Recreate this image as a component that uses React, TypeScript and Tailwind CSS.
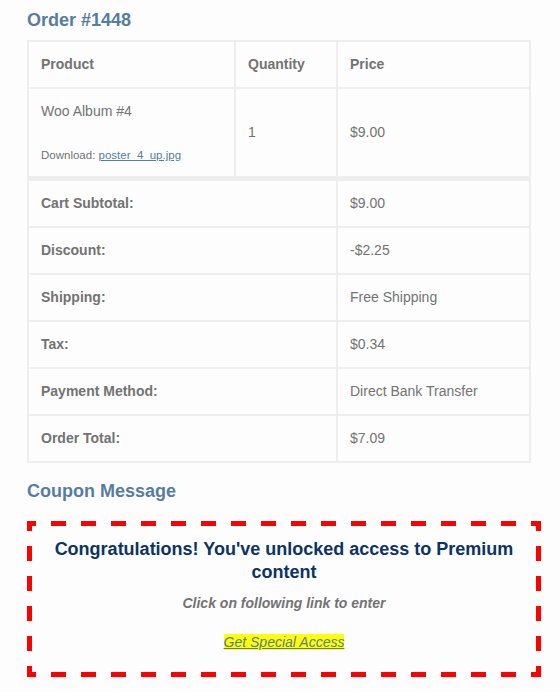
const lineItems = [
  { name: 'Woo Album #4', qty: 1, price: '$9.00', file: 'poster_4_up.jpg' },
]

const totals = [
  { label: 'Cart Subtotal:', value: '$9.00' },
  { label: 'Discount:', value: '-$2.25' },
  { label: 'Shipping:', value: 'Free Shipping' },
  { label: 'Tax:', value: '$0.34' },
  { label: 'Payment Method:', value: 'Direct Bank Transfer' },
  { label: 'Order Total:', value: '$7.09' },
]

const cell = 'border border-[#eeeeee] p-3 text-left align-middle'

// dashed red frame, 5px wide, 15px dashes / 15px gaps with solid corners
function DashedFrame({ w, h }: { w: number; h: number }) {
  const t = 5
  const rects: { x: number; y: number; w: number; h: number }[] = []
  // corners
  rects.push({ x: 0, y: 0, w: 9, h: t }, { x: 0, y: 0, w: t, h: 10 })
  rects.push({ x: w - 10, y: 0, w: 10, h: t }, { x: w - t, y: 0, w: t, h: 10 })
  rects.push({ x: 0, y: h - t, w: 9, h: t }, { x: 0, y: h - 11, w: t, h: 11 })
  rects.push({ x: w - 10, y: h - t, w: 10, h: t }, { x: w - t, y: h - 11, w: t, h: 11 })
  for (let x = 24; x + 15 <= w - 25; x += 30) {
    rects.push({ x, y: 0, w: 15, h: t }, { x, y: h - t, w: 15, h: t })
  }
  for (let y = 25; y + 15 <= h - 26; y += 30) {
    rects.push({ x: 0, y, w: t, h: 15 }, { x: w - t, y, w: t, h: 15 })
  }
  return (
    <svg className="pointer-events-none absolute inset-0" width={w} height={h}>
      {rects.map((r, i) => (
        <rect key={i} x={r.x} y={r.y} width={r.w} height={r.h} fill="#ff0000" />
      ))}
    </svg>
  )
}

export default function App() {
  return (
    <div className="min-h-screen bg-[#fdfdfd] font-['Liberation_Sans',Arial,sans-serif] text-[14px] leading-[21px] text-[#737373]">
      <div className="pl-[27px] pt-[9px] pb-1">
        <h2 className="mb-[8px] text-[18px] leading-[23px] font-bold text-[#557da1]">Order #1448</h2>

        <table className="w-[504px] table-fixed border-separate border-spacing-0 border border-[#eeeeee]">
          <thead>
            <tr>
              <th className={`${cell} w-[207px] font-bold`}>Product</th>
              <th className={`${cell} w-[102px] font-bold`}>Quantity</th>
              <th className={`${cell} w-[193px] font-bold`}>Price</th>
            </tr>
          </thead>
          <tbody>
            {lineItems.map(item => (
              <tr key={item.name}>
                <td className={cell}>
                  {item.name}
                  <div className="mt-[24px] text-[11.5px] leading-[18px]">
                    Download: <a href="#" className="text-[#557da1] underline">{item.file}</a>
                  </div>
                </td>
                <td className={cell}>{item.qty}</td>
                <td className={cell}>{item.price}</td>
              </tr>
            ))}
          </tbody>
          <tfoot>
            {totals.map((t, i) => (
              <tr key={t.label}>
                <th colSpan={2} className={`${cell} font-bold ${i === 0 ? 'border-t-4' : ''}`}>{t.label}</th>
                <td className={`${cell} ${i === 0 ? 'border-t-4' : ''}`}>{t.value}</td>
              </tr>
            ))}
          </tfoot>
        </table>

        <h2 className="mt-[17px] mb-[18px] text-[18px] leading-[23px] font-bold text-[#557da1]">Coupon Message</h2>

        <div className="relative h-[156px] w-[514px] px-[21px] pt-[17px] text-center">
          <DashedFrame w={514} h={156} />
          <h2 className="text-[18px] leading-[23.4px] font-bold text-[#0b3366]">
            Congratulations! You've unlocked access to Premium content
          </h2>
          <p className="mt-[8px] font-bold italic">Click on following link to enter</p>
          <p className="mt-[18px]">
            <a href="#" className="bg-[#ffff00] italic text-[#557da1] underline">Get Special Access</a>
          </p>
        </div>
      </div>
    </div>
  )
}
